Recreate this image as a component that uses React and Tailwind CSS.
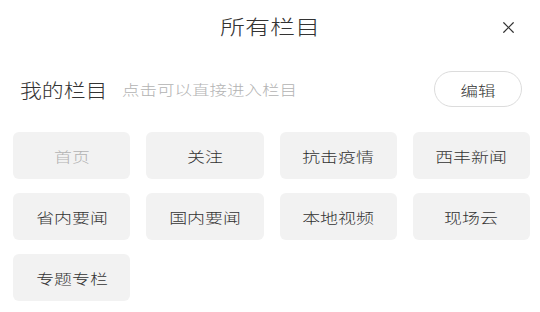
import { X } from "lucide-react";

const channels = [
  { name: "首页", fixed: true },
  { name: "关注" },
  { name: "抗击疫情" },
  { name: "西丰新闻" },
  { name: "省内要闻" },
  { name: "国内要闻" },
  { name: "本地视频" },
  { name: "现场云" },
  { name: "专题专栏" },
];

export default function App() {
  return (
    <div
      className="w-[540px] h-[312px] bg-white overflow-hidden font-light"
      style={{ fontFamily: '"Noto Sans CJK SC", "Noto Sans", sans-serif' }}
    >
      {/* Header */}
      <div className="h-[54px] grid grid-cols-[1fr_auto_1fr] items-center">
        <div />
        <h1 className="inline-block scale-x-[1.25] text-[20px] text-[#333] leading-none">所有栏目</h1>
        <div className="flex justify-end pr-[22px]">
          <X className="w-[19px] h-[19px] text-[#333]" strokeWidth={1.5} />
        </div>
      </div>

      {/* My channels */}
      <div className="mt-[17px] flex items-center justify-between pl-[20px] pr-[18px]">
        <div className="flex items-center">
          <span className="inline-block origin-left scale-x-[1.15] text-[19px] text-[#333] leading-none">
            我的栏目
          </span>
          <span className="ml-[26px] inline-block origin-left scale-x-[1.25] text-[14px] text-[#b3b3b3] leading-none">
            点击可以直接进入栏目
          </span>
        </div>
        <button className="w-[88px] h-[36px] rounded-full border border-[#dcdcdc] text-[#333]">
          <span className="inline-block scale-x-[1.25] text-[14px] leading-none">编辑</span>
        </button>
      </div>

      {/* Channel grid */}
      <div className="mt-[25px] grid grid-cols-4 gap-x-4 gap-y-[14px] pl-[13px] pr-[10px]">
        {channels.map((c) => (
          <div
            key={c.name}
            className="h-[47px] rounded-md bg-[#f2f2f2] flex items-center justify-center"
          >
            <span
              className={
                "inline-block scale-x-[1.28] text-[14px] leading-none " +
                (c.fixed ? "text-[#b3b3b3]" : "text-[#333]")
              }
            >
              {c.name}
            </span>
          </div>
        ))}
      </div>
    </div>
  );
}
